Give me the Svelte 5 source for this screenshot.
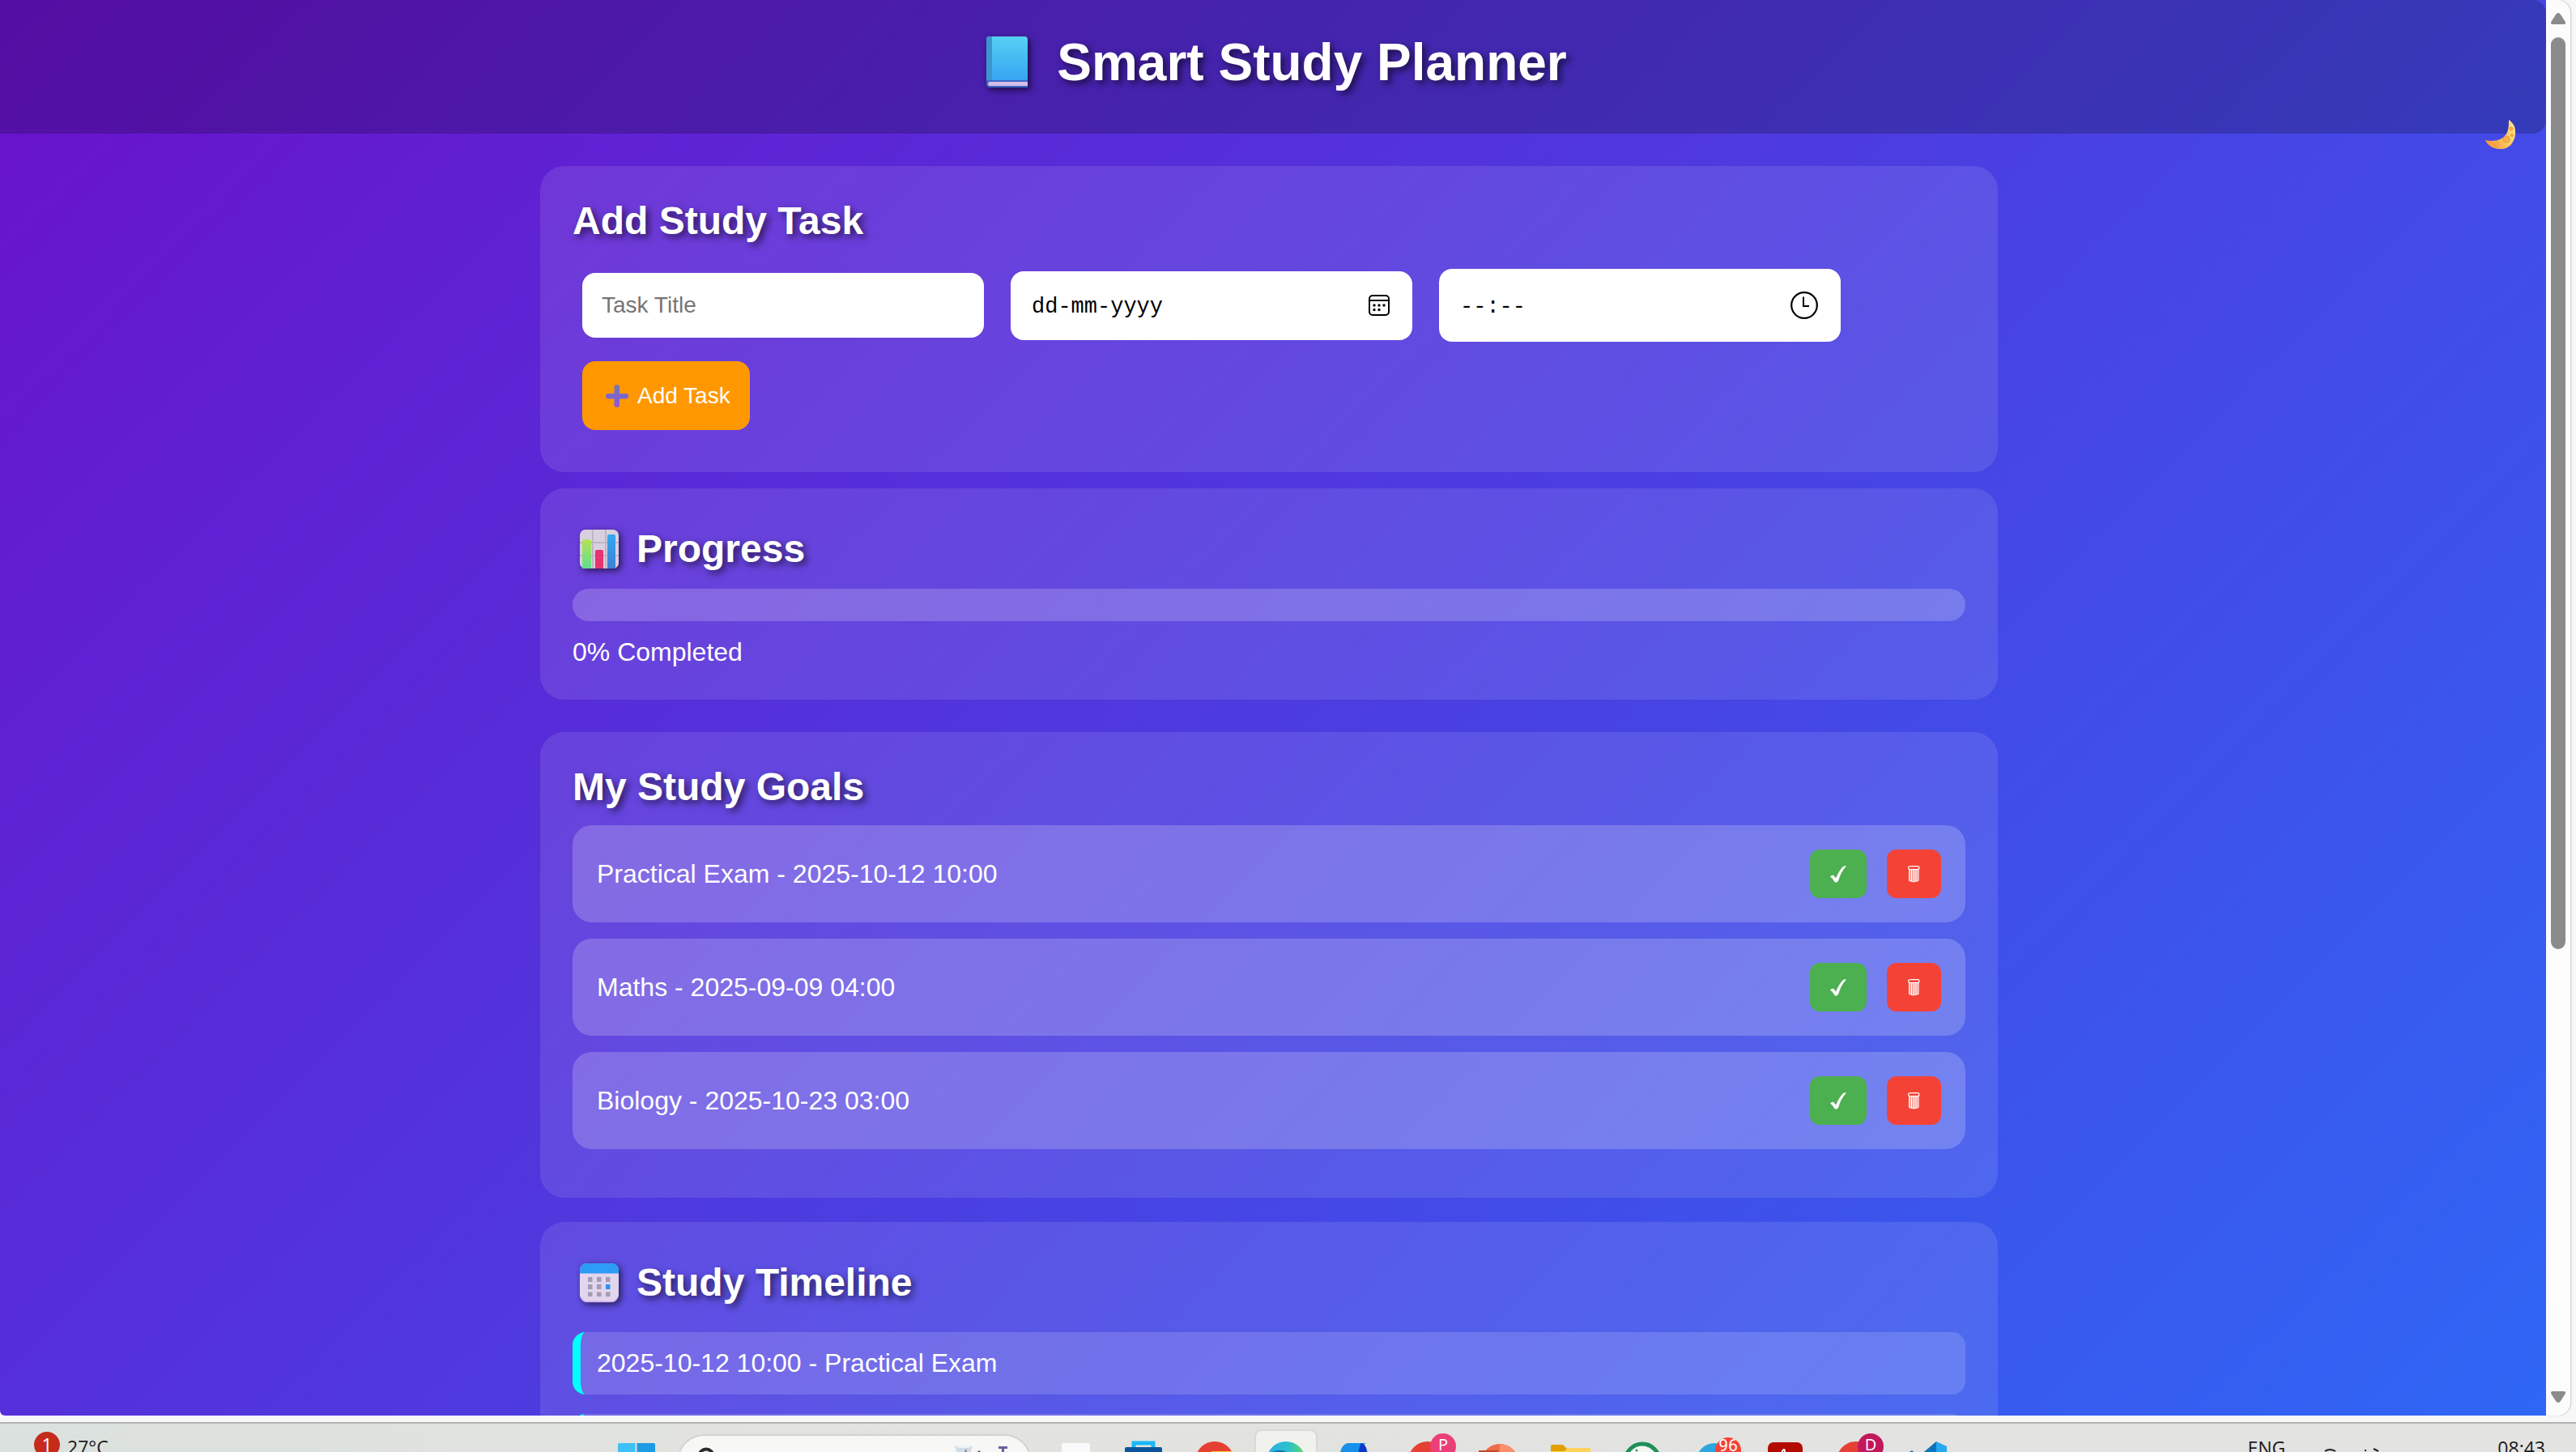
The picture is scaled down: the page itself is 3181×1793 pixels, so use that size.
<script>
  let goals = $state([
    { title: 'Practical Exam', date: '2025-10-12', time: '10:00' },
    { title: 'Maths', date: '2025-09-09', time: '04:00' },
    { title: 'Biology', date: '2025-10-23', time: '03:00' },
  ]);
  let done = $state(0);
  let title = $state('');
  let date = $state('');
  let time = $state('');

  let percent = $derived(goals.length ? Math.round((done / goals.length) * 100) : 0);

  function addTask(event) {
    event.preventDefault();
    if (!title) return;
    goals.push({ title, date, time });
    title = date = time = '';
  }
</script>

<div class="screen">
  <div class="window">
    <div class="viewport">
      <div class="page">
        <header>
          <h1>
            <svg class="emoji" viewBox="0 0 88 85" aria-hidden="true">
              <defs>
                <linearGradient id="cover" x1="0" y1="0" x2="0" y2="1">
                  <stop offset="0" stop-color="#56d0f4" /><stop offset="1" stop-color="#36a5f2" />
                </linearGradient>
              </defs>
              <path d="M21 5H64Q68 5 68 9V68H22Q17 68 17 63V9Q17 5 21 5Z" fill="#3f67c4" />
              <path d="M21 5H64Q68 5 68 9V59H17V9Q17 5 21 5Z" fill="url(#cover)" />
              <path d="M21 5H24V59H17V9Q17 5 21 5Z" fill="#3d95cf" />
              <path d="M21 61H68V66H21Q19 66 19 63.500Q19 61 21 61Z" fill="#d3bde8" />
            </svg>
            <span>Smart Study Planner</span>
          </h1>
        </header>

        <button class="theme" aria-label="Toggle dark mode">
          <svg viewBox="0 0 38 38" aria-hidden="true">
            <defs>
              <linearGradient id="moon" x1="1" y1="0.200" x2="0" y2="0.800">
                <stop offset="0" stop-color="#ffe38a" /><stop offset="0.500" stop-color="#fdc35c" /><stop offset="1" stop-color="#f9923f" />
              </linearGradient>
            </defs>
            <path d="M29 0C35 4 38 10 37 18C36 29 28 37 18 36C10 36 3 32 0 25C9 27 18 26 24 20C29 15 29 7 29 0Z" fill="url(#moon)" />
            <g fill="#f7b04a" stroke="#e69a3a" stroke-width="1">
              <circle cx="26" cy="24" r="4" /><circle cx="14" cy="30" r="2.500" /><circle cx="32" cy="11" r="2" /><circle cx="33" cy="19" r="1.500" />
            </g>
          </svg>
        </button>

        <main>
          <section class="card add">
            <h2>Add Study Task</h2>
            <form onsubmit={addTask}>
              <input class="field" type="text" placeholder="Task Title" aria-label="Task title" bind:value={title} />
              <div class="field picker date">
                <input type="text" placeholder="dd-mm-yyyy" aria-label="Date" bind:value={date} />
                <svg viewBox="0 0 26 26" aria-hidden="true">
                  <rect x="1" y="1" width="24" height="24" rx="4" fill="none" stroke="#000" stroke-width="2" />
                  <path d="M1 7H25" stroke="#000" stroke-width="2" />
                  <g><circle cx="7" cy="13" r="1.700" /><circle cx="13" cy="13" r="1.700" /><circle cx="19" cy="13" r="1.700" /><circle cx="7" cy="18.500" r="1.700" /><circle cx="13" cy="18.500" r="1.700" /></g>
                </svg>
              </div>
              <div class="field picker time">
                <input type="text" placeholder="--:--" aria-label="Time" bind:value={time} />
                <svg viewBox="0 0 34 34" aria-hidden="true">
                  <circle cx="17" cy="17" r="15.800" fill="none" stroke="#000" stroke-width="2.200" />
                  <path d="M16 6.500V18H23" fill="none" stroke="#000" stroke-width="2" />
                </svg>
              </div>
              <button class="submit">
                <svg viewBox="0 0 36 28" aria-hidden="true">
                  <defs>
                    <linearGradient id="plus" x1="0" y1="0" x2="0" y2="1">
                      <stop offset="0" stop-color="#7f75a8" /><stop offset="0.500" stop-color="#7a68cc" /><stop offset="1" stop-color="#8f55dc" />
                    </linearGradient>
                  </defs>
                  <path d="M19 0Q22 0 22 3V11H30Q33 11 33 14Q33 17.500 30 17.500H22V25Q22 28 19 28Q15.500 28 15.500 25V17.500H8Q5 17.500 5 14Q5 11 8 11H15.500V3Q15.500 0 19 0Z" fill="url(#plus)" />
                </svg>
                Add Task
              </button>
            </form>
          </section>

          <section class="card progress">
            <h2 class="with-icon">
              <svg class="emoji" viewBox="0 0 66 64" aria-hidden="true">
                <defs>
                  <linearGradient id="green" x1="0" y1="0" x2="0" y2="1"><stop offset="0" stop-color="#b4e352" /><stop offset="1" stop-color="#62dc90" /></linearGradient>
                  <linearGradient id="blue" x1="0" y1="0" x2="0" y2="1"><stop offset="0" stop-color="#34a8f2" /><stop offset="1" stop-color="#3f80d4" /></linearGradient>
                </defs>
                <rect x="9" y="11" width="48" height="48" rx="7" fill="#d8d0e0" />
                <path d="M9 27H57M9 43H57M25 11V59M41 11V59" stroke="#bdb6c4" stroke-width="2" />
                <path d="M12 59V26Q12 23 15 23H20Q23 23 23 26V59Z" fill="url(#green)" />
                <path d="M28 59V38Q28 36 30 36H36Q38 36 38 38V59Z" fill="#e8336e" />
                <path d="M43 59V19Q43 17 45 17H51Q53 17 53 19V59Z" fill="url(#blue)" />
              </svg>
              <span>Progress</span>
            </h2>
            <div class="bar" role="progressbar" aria-label="Progress" aria-valuenow={percent} aria-valuemin="0" aria-valuemax="100">
              <div class="fill" style="width: {percent}%"></div>
            </div>
            <p>{percent}% Completed</p>
          </section>

          <section class="card goals">
            <h2>My Study Goals</h2>
            <ul>
              {#each goals as goal, i}
                <li>
                  <span>{goal.title} - {goal.date} {goal.time}</span>
                  <div class="actions">
                    <button class="complete" aria-label="Complete {goal.title}" onclick={() => (done += 1)}>
                      <svg viewBox="0 0 20 21" aria-hidden="true"><path d="M16 1Q18 0 20 0.500C15 6 12.500 11 10 19Q7.500 22 5.500 20Q3.500 16 0 13.500Q2 11 4.500 12L7 15.500Q11 6 16 1Z" fill="#fff" /></svg>
                    </button>
                    <button class="remove" aria-label="Delete {goal.title}" onclick={() => goals.splice(i, 1)}>
                      <svg viewBox="0 0 17 21" aria-hidden="true">
                        <path d="M2.500 4V18.500Q8 21.500 14 18.500V4Z" fill="#fff" fill-opacity="0.500" />
                        <path d="M2.500 4V18.500Q8 21.500 14 18.500V4M5.500 5.500V19M11 5.500V19M8.300 5.500V19.500" fill="none" stroke="#fff" stroke-width="1" />
                        <rect x="1.600" y="0.600" width="13.400" height="4" rx="2" fill="#f44336" stroke="#fff" stroke-width="1.200" />
                      </svg>
                    </button>
                  </div>
                </li>
              {/each}
            </ul>
          </section>

          <section class="card timeline">
            <h2 class="with-icon">
              <svg class="emoji" viewBox="0 0 66 64" aria-hidden="true">
                <rect x="9" y="11" width="48" height="48" rx="9" fill="#e2d5ee" />
                <path d="M9 23.500V20Q9 11 18 11H48Q57 11 57 20V23.500Z" fill="#2e9bf6" />
                <path d="M11 54Q13 58.500 18 58.500H48Q53 58.500 55 54" fill="none" stroke="#c9a8e6" stroke-width="1.500" />
                <g fill="#a59db3">
                  <path d="M19 28H24.500V34H19ZM30 28H35.500V34H30ZM41 28H46.500V34H41ZM19 37H24.500V43H19ZM30 37H35.500V43H30ZM19 46.500H24.500V52H19ZM30 46.500H35.500V52H30ZM41 46.500H46.500V52H41Z" />
                </g>
                <path d="M41 37H46.500V43H41Z" fill="#2e94ee" />
              </svg>
              <span>Study Timeline</span>
            </h2>
            <ol>
              {#each goals as goal}
                <li>{goal.date} {goal.time} - {goal.title}</li>
              {/each}
            </ol>
          </section>
        </main>
      </div>
    </div>
    <div class="scrollbar" aria-hidden="true">
      <svg viewBox="0 0 18 14"><path d="M9 0Q11 0 12 2L17.500 10.500Q19 14 16 14H2Q-1 14 0.500 10.500L6 2Q7 0 9 0Z" fill="#8b8b8b" /></svg>
      <div class="track"><div class="thumb"></div></div>
      <svg viewBox="0 0 18 14"><path d="M9 14Q11 14 12 12L17.500 3.500Q19 0 16 0H2Q-1 0 0.500 3.500L6 12Q7 14 9 14Z" fill="#8b8b8b" /></svg>
    </div>
  </div>

  <footer class="taskbar">
    <div class="weather"><b>1</b><span>27°C</span></div>
    <nav>
      <svg class="slot" viewBox="0 0 88 35">
        <path d="M23 24H42.500V46H21V26Q21 24 23 24Z" fill="#3fc0f8" /><path d="M44.500 24H65Q67 24 67 26V46H44.500Z" fill="#1f9be6" />
      </svg>
      <div class="search">
        <svg viewBox="0 0 434 20">
          <circle cx="34" cy="25" r="8.500" fill="none" stroke="#2b2b2b" stroke-width="4" />
          <path d="M341 12H363L358 30H346Z" fill="#cfdbe6" /><ellipse cx="352" cy="13" rx="10" ry="2" fill="#eef3f8" /><path d="M355 16L351 26H356Z" fill="#8a4a35" />
          <path d="M370 19L373 22" stroke="#4a4a52" stroke-width="3" />
          <path d="M395 13H406V16H402V20H399V16H395Z" fill="#6b5f98" /><path d="M393 20H409V30H393Z" fill="#c5c8d2" />
        </svg>
      </div>
      <svg class="slot" viewBox="0 0 88 35"><rect x="31" y="24" width="35" height="30" rx="2" fill="#fafafa" /></svg>
      <svg class="slot" viewBox="0 0 88 35">
        <path d="M32 34V24H56V34" fill="none" stroke="#18b8f6" stroke-width="5" /><rect x="21" y="29" width="46" height="20" rx="2" fill="#0c549c" />
      </svg>
      <svg class="slot" viewBox="0 0 88 35"><circle cx="44" cy="46" r="24" fill="#e64034" /><path d="M40 34H66L68 40H40Z" fill="#fcc934" /></svg>
      <svg class="slot" viewBox="0 0 88 35">
        <defs><linearGradient id="wave"><stop offset="0" stop-color="#2bb0e8" /><stop offset="0.600" stop-color="#2ec2c8" /><stop offset="1" stop-color="#62dc58" /></linearGradient></defs>
        <rect x="6" y="8" width="76" height="60" rx="8" fill="#f1f1ee" stroke="#d9d9d5" stroke-width="2" />
        <circle cx="44" cy="46" r="24" fill="url(#wave)" /><ellipse cx="36" cy="40" rx="13" ry="7" fill="#0e6bb0" />
      </svg>
      <svg class="slot" viewBox="0 0 88 35">
        <path d="M32 24H55Q48 27 46 40H22Q24 26 32 24Z" fill="#1690ea" /><path d="M49 24Q56 25 57 40H45Q46 28 49 24Z" fill="#0b38c8" />
      </svg>
      <svg class="slot" viewBox="0 0 88 35">
        <circle cx="43" cy="46" r="24" fill="#e64034" /><circle cx="62" cy="28" r="16" fill="#ec3f78" />
        <text x="62" y="33" font-size="20" text-anchor="middle" fill="#fff">P</text>
      </svg>
      <svg class="slot" viewBox="0 0 88 35">
        <circle cx="44" cy="48" r="23" fill="#ed6c47" /><path d="M44 25A23 23 0 0 1 65 40H44Z" fill="#ff8f6b" /><rect x="18" y="33" width="24" height="10" fill="#c0482a" />
      </svg>
      <svg class="slot" viewBox="0 0 88 35">
        <path d="M19 28Q19 26 21 26H34L39 31V40H19Z" fill="#e0a000" /><path d="M19 34H36L40 30H68V40H19Z" fill="#ffd35c" />
      </svg>
      <svg class="slot" viewBox="0 0 88 35"><circle cx="44" cy="46" r="21" fill="#f2f5f2" stroke="#1f8f58" stroke-width="5" /><path d="M36 32L38 34" stroke="#1f8f58" stroke-width="2" /></svg>
      <svg class="slot" viewBox="0 0 88 35">
        <circle cx="45" cy="46" r="22" fill="#2fa5e0" /><circle cx="62" cy="33" r="16" fill="#f44336" />
        <text class="count" x="62" y="34" font-size="21" text-anchor="middle" fill="#fff">96</text>
      </svg>
      <svg class="slot" viewBox="0 0 88 35"><rect x="23" y="23" width="43" height="40" rx="7" fill="#b30b00" /><path d="M40 38Q41 32 43 32Q45 33 43 38" fill="none" stroke="#fff" stroke-width="2" /></svg>
      <svg class="slot" viewBox="0 0 88 35">
        <circle cx="44" cy="46" r="24" fill="#e64034" /><circle cx="62" cy="28" r="16" fill="#c2185b" />
        <text x="62" y="33" font-size="20" text-anchor="middle" fill="#fff">D</text>
      </svg>
      <svg class="slot" viewBox="0 0 88 35">
        <path d="M55 22V40H34Z" fill="#0a74ba" /><path d="M55 22L68 28V40H55Z" fill="#28a8ee" /><path d="M22 35L25 33L29 37H22Z" fill="#0a74ba" />
      </svg>
    </nav>
    <div class="tray">
      <span>ENG</span>
      <svg viewBox="0 0 88 35" aria-hidden="true"><path d="M8 34Q14 30 21 34M57 33H59M68 31L74 34" fill="none" stroke="#222" stroke-width="2" /></svg>
      <time>08:43</time>
    </div>
  </footer>
</div>

<style>
  :global(body) { overflow: hidden; }
  .screen {
    display: flex;
    flex-direction: column;
    height: 100vh;
    overflow: hidden;
    background: #f7f7f7;
    font-family: "Liberation Sans", Arial, sans-serif;
    font-size: 32px;
    color: #fff;
  }
  button, input { font-family: inherit; font-size: 28px; border: 0; }
  button { cursor: pointer; }
  h1, h2, p, ul, ol { margin: 0; padding: 0; list-style: none; }

  .window { flex: 1; min-height: 0; display: flex; padding-right: 7px; margin-bottom: 8px; }
  .viewport { flex: 1; overflow: hidden; border-bottom-left-radius: 6px; }
  .page {
    position: relative;
    box-sizing: border-box;
    min-height: 148%;
    background: linear-gradient(135deg, #6a11cb, #2575fc);
  }

  header {
    padding: 40px 8px 40px 0;
    background: rgba(0, 0, 0, 0.2);
    border-radius: 0 16px 16px 0;
  }
  h1 {
    display: flex;
    justify-content: center;
    gap: 16px;
    font-size: 64px;
    line-height: 74px;
    text-shadow: 4px 4px 8px rgba(0, 0, 0, 0.6);
  }
  h1 svg { width: 88px; height: 85px; }
  .emoji { flex: none; filter: drop-shadow(3px 3px 4px rgba(0, 0, 0, 0.6)); }

  .theme {
    position: absolute;
    top: 148px;
    right: 37px;
    padding: 0;
    background: none;
  }
  .theme svg { display: block; width: 38px; height: 38px; }

  main { max-width: 1800px; margin: 0 auto; padding: 40px 10px 40px 0; }
  .card {
    padding: 40px;
    background: rgba(255, 255, 255, 0.1);
    border-radius: 30px;
  }
  .progress { margin: 20px 0 40px; }
  .timeline { margin-top: 30px; }
  h2 {
    margin-bottom: 20px;
    font-size: 48px;
    line-height: 55px;
    text-shadow: 4px 4px 8px rgba(0, 0, 0, 0.6);
  }
  .with-icon { display: flex; align-items: flex-end; gap: 13px; line-height: 58px; }
  .with-icon svg { width: 66px; height: 64px; }

  form {
    display: flex;
    flex-wrap: wrap;
    align-items: center;
    gap: 24px 33px;
    padding: 12px;
  }
  .field {
    box-sizing: border-box;
    width: 496px;
    background: #fff;
    border-radius: 16px;
    padding: 24px;
    line-height: 32px;
  }
  input { outline: none; color: #000; }
  input.field { height: 80px; }
  input.field::placeholder { color: #757575; }
  .picker { display: flex; align-items: center; padding: 0 28px 0 26px; }
  .picker input {
    flex: 1;
    min-width: 0;
    padding: 3px 0 0;
    background: none;
    font-family: "Liberation Mono", monospace;
    font-size: 27px;
  }
  .picker input::placeholder { color: #000; opacity: 1; }
  .date { height: 85px; }
  .date svg { width: 26px; height: 26px; }
  .time { height: 90px; }
  .time svg { width: 34px; height: 34px; }
  .submit {
    display: flex;
    align-items: center;
    gap: 8px;
    height: 85px;
    padding: 1px 24px 0;
    border-radius: 16px;
    background: #ff9800;
    color: #fff;
  }
  .submit svg { width: 36px; height: 28px; }
  .add form { margin-right: 60px; }

  .bar { height: 40px; margin-bottom: 20px; border-radius: 20px; overflow: hidden; background: rgba(255, 255, 255, 0.2); }
  .fill { height: 100%; background: #4caf50; }
  p, li { line-height: 37px; }

  .goals li {
    display: flex;
    align-items: center;
    justify-content: space-between;
    padding: 30px;
    margin-bottom: 20px;
    border-radius: 24px;
    background: rgba(255, 255, 255, 0.2);
  }
  .actions { display: flex; gap: 25px; }
  .actions button {
    display: flex;
    align-items: center;
    justify-content: center;
    height: 60px;
    padding: 0 25px;
    border-radius: 12px;
  }
  .complete { background: #4caf50; }
  .remove { background: #f44336; }
  .actions svg { height: 21px; }
  .complete svg { width: 20px; }
  .remove svg { width: 17px; }

  .timeline ol { display: grid; gap: 24px; padding-top: 12px; }
  .timeline li {
    padding: 20px;
    border-left: 10px solid #00ffff;
    border-radius: 16px;
    background: rgba(255, 255, 255, 0.15);
  }

  .scrollbar {
    box-sizing: border-box;
    width: 30px;
    display: flex;
    flex-direction: column;
    align-items: center;
    gap: 16px;
    padding: 16px 0;
    background: #fcfcfc;
    border-radius: 0 16px 16px 0;
    box-shadow: 1px 0 2px rgba(0, 0, 0, 0.2);
  }
  .scrollbar svg { width: 18px; height: 14px; }
  .track { flex: 1; width: 18px; }
  .thumb { height: 68%; border-radius: 9px; background: #8b8b8b; }

  .taskbar {
    box-sizing: border-box;
    display: grid;
    grid-template-columns: 1fr auto 1fr;
    height: 37px;
    padding-right: 16px;
    overflow: hidden;
    border-top: 2px solid #b3b4b1;
    background: linear-gradient(90deg, #dbe1de, #e2e3df 30%, #e3e3e2);
    font-family: "Open Sans", "Noto Sans", sans-serif;
    font-size: 23px;
    line-height: 32px;
    color: #1b1b1b;
  }
  .weather { display: flex; gap: 9px; padding: 10px 0 0 42px; }
  .weather b {
    width: 32px;
    height: 32px;
    border-radius: 50%;
    background: #c42b1c;
    color: #fff;
    font-weight: 400;
    text-align: center;
  }
  .weather span { padding-top: 3px; }
  nav { display: flex; align-items: flex-start; }
  .slot { width: 88px; height: 35px; }
  .count { font-family: Roboto, sans-serif; }
  .search {
    box-sizing: border-box;
    width: 434px;
    height: 64px;
    margin: 15px 8px 0;
    border-radius: 32px;
    background: #f7f7f6;
    box-shadow: 0 0 0 2px #d2d3d0;
  }
  .search svg { display: block; width: 434px; height: 20px; }
  .tray { display: flex; justify-content: flex-end; padding: 14px 22px 0 0; }
  .tray svg { width: 88px; height: 35px; margin: -14px 133px 0 41px; }
</style>
